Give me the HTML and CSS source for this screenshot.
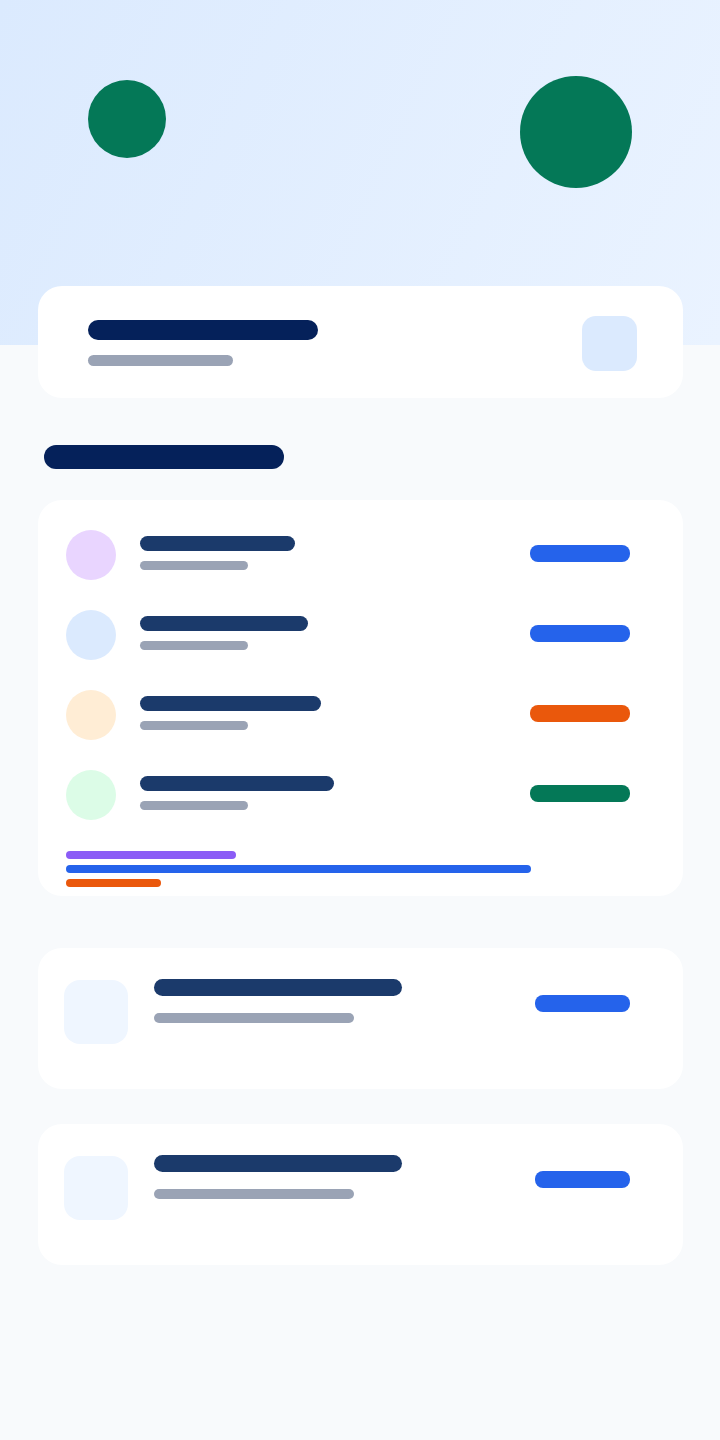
FILE: index.html
```html
<!DOCTYPE html>
<html lang="en">
<head>
<meta charset="UTF-8">
<meta name="viewport" content="width=device-width, initial-scale=1.0">
<title>Dashboard</title>
<link rel="stylesheet" href="styles.css">
</head>
<body>
<div class="hero">
    <div class="dot dot-small"></div>
    <div class="dot dot-big"></div>
</div>

<div class="content">
    <div class="card summary">
        <div class="lines">
            <div class="bar bar-head"></div>
            <div class="bar bar-sub"></div>
        </div>
        <div class="summary-icon"></div>
    </div>

    <div class="bar section-title"></div>

    <div class="card list">
        <div class="row">
            <div class="avatar av-purple"></div>
            <div class="lines lines-row">
                <div class="bar bar-title" style="width: 155px;"></div>
                <div class="bar bar-meta"></div>
            </div>
            <div class="pill pill-row pill-blue"></div>
        </div>
        <div class="row">
            <div class="avatar av-blue"></div>
            <div class="lines lines-row">
                <div class="bar bar-title" style="width: 168px;"></div>
                <div class="bar bar-meta"></div>
            </div>
            <div class="pill pill-row pill-blue"></div>
        </div>
        <div class="row">
            <div class="avatar av-orange"></div>
            <div class="lines lines-row">
                <div class="bar bar-title" style="width: 181px;"></div>
                <div class="bar bar-meta"></div>
            </div>
            <div class="pill pill-row pill-orange"></div>
        </div>
        <div class="row">
            <div class="avatar av-green"></div>
            <div class="lines lines-row">
                <div class="bar bar-title" style="width: 194px;"></div>
                <div class="bar bar-meta"></div>
            </div>
            <div class="pill pill-row pill-green"></div>
        </div>
        <div class="legend">
            <div class="bar legend-bar lg-purple" style="width: 170px;"></div>
            <div class="bar legend-bar lg-blue" style="width: 465px;"></div>
            <div class="bar legend-bar lg-orange" style="width: 95px;"></div>
        </div>
    </div>

    <div class="card item">
        <div class="item-icon"></div>
        <div class="lines lines-item">
            <div class="bar item-title"></div>
            <div class="bar item-meta"></div>
        </div>
        <div class="pill pill-blue pill-item"></div>
    </div>

    <div class="card item">
        <div class="item-icon"></div>
        <div class="lines lines-item">
            <div class="bar item-title"></div>
            <div class="bar item-meta"></div>
        </div>
        <div class="pill pill-blue pill-item"></div>
    </div>
</div>
</body>
</html>
```

FILE: styles.css
```css
body {
    margin: 0;
    padding: 0;
    background-color: #f8fafc;
    font-family: "Inter", "Liberation Sans", sans-serif;
    min-height: 1440px;
}
.hero {
    height: 345px;
    box-sizing: border-box;
    padding: 76px 88px 0;
    display: flex;
    justify-content: space-between;
    align-items: flex-start;
    background: linear-gradient(115deg, #dbeafe 0%, #eaf3ff 100%);
}
.dot {
    border-radius: 50%;
    background-color: #047857;
}
.dot-small {
    width: 78px;
    height: 78px;
    margin-top: 4px;
}
.dot-big {
    width: 112px;
    height: 112px;
}
.content {
    padding: 0 37px 0 38px;
    display: flex;
    flex-direction: column;
}
.card {
    background-color: #fff;
    border-radius: 24px;
}
.bar {
    border-radius: 999px;
}
.lines {
    display: flex;
    flex-direction: column;
}
.summary {
    margin-top: -59px;
    height: 112px;
    box-sizing: border-box;
    padding: 2px 46px 0 50px;
    display: flex;
    align-items: center;
    justify-content: space-between;
}
.bar-head {
    width: 230px;
    height: 20px;
    background-color: #05215a;
}
.bar-sub {
    width: 145px;
    height: 11px;
    margin-top: 15px;
    background-color: #9aa3b5;
}
.summary-icon {
    width: 55px;
    height: 55px;
    border-radius: 14px;
    background-color: #dbeafe;
}
.section-title {
    width: 240px;
    height: 24px;
    margin: 47px 0 0 6px;
    background-color: #05215a;
}
.list {
    margin-top: 31px;
    padding: 30px 53px 9px 28px;
}
.row {
    display: flex;
    align-items: flex-start;
    margin-bottom: 30px;
}
.avatar {
    width: 50px;
    height: 50px;
    border-radius: 50%;
    flex-shrink: 0;
}
.av-purple { background-color: #e9d5ff; }
.av-blue { background-color: #dbeafe; }
.av-orange { background-color: #ffedd5; }
.av-green { background-color: #dcfce7; }
.lines-row {
    margin-left: 24px;
    padding-top: 6px;
}
.bar-title {
    height: 15px;
    background-color: #1b3a6b;
}
.bar-meta {
    width: 108px;
    height: 9px;
    margin-top: 10px;
    background-color: #9aa3b5;
}
.pill {
    margin-left: auto;
    width: 100px;
    height: 17px;
    border-radius: 8px;
}
.pill-row {
    margin-top: 15px;
}
.pill-blue { background-color: #2563eb; }
.pill-orange { background-color: #ea580c; }
.pill-green { background-color: #047857; }
.legend {
    margin-top: 31px;
    display: flex;
    flex-direction: column;
    gap: 6px;
}
.legend-bar {
    height: 8px;
}
.lg-purple { background-color: #8b5cf6; }
.lg-blue { background-color: #2563eb; }
.lg-orange { background-color: #ea580c; }
.item {
    margin-top: 52px;
    height: 141px;
    box-sizing: border-box;
    padding: 32px 53px 0 26px;
    display: flex;
    align-items: flex-start;
}
.item + .item {
    margin-top: 35px;
}
.item-icon {
    width: 64px;
    height: 64px;
    border-radius: 16px;
    background-color: #eff6ff;
    flex-shrink: 0;
}
.lines-item {
    margin: -1px 0 0 26px;
}
.item-title {
    width: 248px;
    height: 17px;
    background-color: #1b3a6b;
}
.item-meta {
    width: 200px;
    height: 10px;
    margin-top: 17px;
    background-color: #9aa3b5;
}
.pill-item {
    width: 95px;
    margin-top: 15px;
}
```
